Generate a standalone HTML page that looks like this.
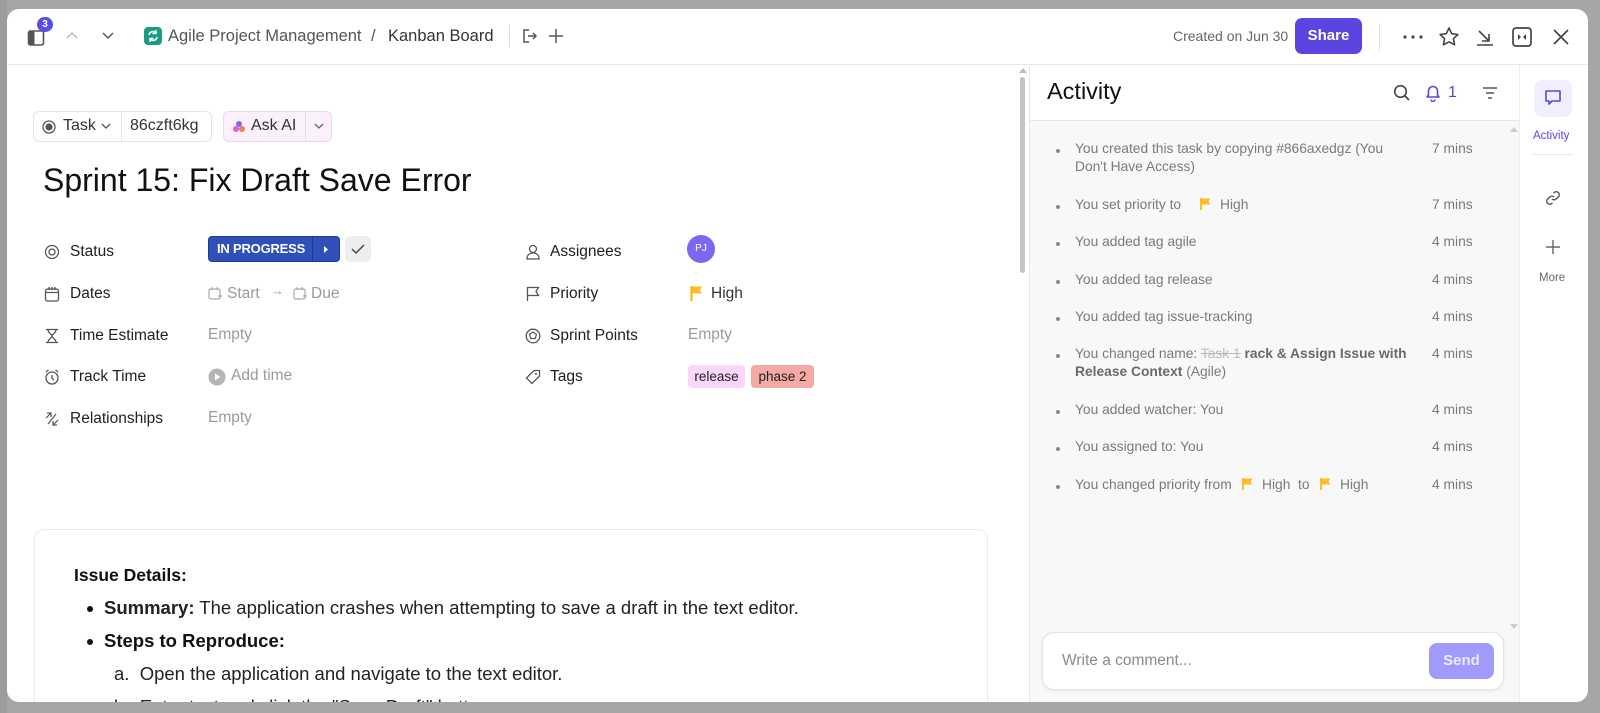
<!DOCTYPE html>
<html><head><meta charset="utf-8"><style>
*{box-sizing:border-box;margin:0;padding:0}
body{width:1600px;height:713px;overflow:hidden;background:#a6a6a6;font-family:"Liberation Sans",sans-serif;position:relative;color:#202020}
.a{position:absolute;white-space:nowrap}
.modal{position:absolute;left:7px;top:9px;width:1581px;height:693px;background:#fff;border-radius:12px;overflow:hidden}
.ic{position:absolute}
svg{display:block}
.lbl{font-size:15.5px;color:#202020}
.val{font-size:15.5px;color:#9a9a9a}
.act{font-size:13.8px;color:#7a7a7a}
.tm{font-size:13.8px;color:#7a7a7a}
.dot{position:absolute;width:4px;height:4px;border-radius:2px;background:#8a8a8a}
</style></head><body>
<div class="a" style="left:0;top:0;width:7px;height:713px;background:#9c9c9c"></div>
<div class="modal">
 <div class="a" style="left:0;top:55px;width:1581px;height:1px;background:#e8e8e8"></div>
 <div class="ic" style="left:20px;top:20px"><svg width="18" height="18" viewBox="0 0 18 18"><rect x="1.5" y="2" width="15" height="14" rx="2" fill="none" stroke="#555" stroke-width="1.6"/><rect x="1.5" y="2" width="6" height="14" rx="1.5" fill="#555"/></svg></div>
 <div class="a" style="left:30px;top:8px;width:16px;height:15px;border-radius:8px;background:#5b4ee6;color:#fff;font-size:10px;text-align:center;line-height:15px;font-weight:bold">3</div>
 <div class="ic" style="left:59px;top:22px"><svg width="12" height="8"><path d="M1 7 6 2 11 7" fill="none" stroke="#bbb" stroke-width="1.5"/></svg></div>
 <div class="ic" style="left:95px;top:23px"><svg width="12" height="8"><path d="M1 1 6 6 11 1" fill="none" stroke="#555" stroke-width="1.5"/></svg></div>
 <div class="a" style="left:137px;top:18px;width:18px;height:18px;border-radius:4px;background:#1a9c83"><svg width="18" height="18"><path d="M5 8a4 4 0 0 1 7-2M13 10a4 4 0 0 1-7 2" fill="none" stroke="#fff" stroke-width="1.6"/><path d="M12 3v3.5H8.5M6 15v-3.5h3.5" fill="none" stroke="#fff" stroke-width="1.4"/></svg></div>
 <div class="a" style="left:161px;top:18px;font-size:16.5px;color:#555">Agile Project Management</div>
 <div class="a" style="left:364px;top:18px;font-size:16.5px;color:#555">/</div>
 <div class="a" style="left:381px;top:18px;font-size:16.5px;color:#333">Kanban Board</div>
 <div class="a" style="left:502px;top:16px;width:1px;height:22px;background:#ddd"></div>
 <div class="ic" style="left:513px;top:18px"><svg width="18" height="18"><path d="M9 3H4v12h5M8 9h8M13 6l3 3-3 3" fill="none" stroke="#555" stroke-width="1.5"/></svg></div>
 <div class="ic" style="left:541px;top:19px"><svg width="16" height="16"><path d="M8 1v14M1 8h14" stroke="#555" stroke-width="1.5"/></svg></div>
 <div class="a" style="left:1166px;top:19px;font-size:14px;color:#666">Created on Jun 30</div>
 <div class="a" style="left:1288px;top:9px;width:67px;height:36px;border-radius:7px;background:#5b45e0;color:#fff;font-weight:bold;font-size:15px;text-align:center;line-height:36px">Share</div>
 <div class="a" style="left:1372px;top:14px;width:1px;height:28px;background:#e2e2e2"></div>
 <div class="ic" style="left:1396px;top:26px"><svg width="20" height="4"><circle cx="2" cy="2" r="1.6" fill="#444"/><circle cx="10" cy="2" r="1.6" fill="#444"/><circle cx="18" cy="2" r="1.6" fill="#444"/></svg></div>
 <div class="ic" style="left:1431px;top:17px"><svg width="22" height="22"><path d="M11 2l2.7 5.7 6.2.8-4.5 4.2 1.2 6.1L11 15.8 5.4 18.8l1.2-6.1L2.1 8.5l6.2-.8z" fill="none" stroke="#444" stroke-width="1.6" stroke-linejoin="round"/></svg></div>
 <div class="ic" style="left:1468px;top:18px"><svg width="20" height="20"><path d="M4 4l10 10M14 7v7H7M2 18h16" fill="none" stroke="#444" stroke-width="1.6"/></svg></div>
 <div class="ic" style="left:1504px;top:17px"><svg width="22" height="22"><rect x="2" y="2" width="18" height="18" rx="3" fill="none" stroke="#444" stroke-width="1.7"/><path d="M7 8v6l3-3zM15 8v6l-3-3z" fill="#444"/></svg></div>
 <div class="ic" style="left:1545px;top:19px"><svg width="18" height="18"><path d="M2 2l14 14M16 2 2 16" stroke="#444" stroke-width="1.7"/></svg></div>

 <div class="a" style="left:26px;top:102px;width:179px;height:31px;border:1px solid #e4e4e4;border-radius:6px"></div>
 <div class="a" style="left:114px;top:102px;width:1px;height:31px;background:#e4e4e4"></div>
 <div class="ic" style="left:35px;top:111px"><svg width="14" height="14"><circle cx="7" cy="7" r="6" fill="none" stroke="#555" stroke-width="1.3"/><circle cx="7" cy="7" r="3.6" fill="#555"/></svg></div>
 <div class="a" style="left:56px;top:108px;font-size:16px;color:#333">Task</div>
 <div class="ic" style="left:94px;top:114px"><svg width="10" height="7"><path d="M1 1l4 4 4-4" fill="none" stroke="#555" stroke-width="1.3"/></svg></div>
 <div class="a" style="left:123px;top:108px;font-size:16px;color:#333">86czft6kg</div>
 <div class="a" style="left:216px;top:102px;width:109px;height:31px;border:1px solid #f0d4f0;background:#fcf0fc;border-radius:6px"></div>
 <div class="a" style="left:298px;top:103px;width:1px;height:29px;background:#f0d4f0"></div>
 <div class="ic" style="left:225px;top:111px"><svg width="14" height="14"><circle cx="7" cy="4" r="3" fill="#7b6cf6"/><circle cx="4" cy="9" r="3" fill="#e45fd0"/><circle cx="10" cy="9" r="3" fill="#f27e5a"/></svg></div>
 <div class="a" style="left:244px;top:108px;font-size:16px;color:#333">Ask AI</div>
 <div class="ic" style="left:307px;top:114px"><svg width="10" height="7"><path d="M1 1l4 4 4-4" fill="none" stroke="#666" stroke-width="1.3"/></svg></div>

 <div class="a" style="left:36px;top:153px;font-size:32px;color:#111">Sprint 15: Fix Draft Save Error</div>

 <div class="ic" style="left:37px;top:235px"><svg width="16" height="16"><circle cx="8" cy="8" r="6.5" fill="none" stroke="#555" stroke-width="1.3"/><circle cx="8" cy="8" r="3" fill="none" stroke="#555" stroke-width="1.3"/></svg></div>
 <div class="a lbl" style="left:63px;top:234px">Status</div>
 <div class="a" style="left:201px;top:227px;width:132px;height:26px;border-radius:4px;background:#2f50b8;border:1px solid #1e3a9a"></div>
 <div class="a" style="left:210px;top:232px;font-size:13px;color:#fff;font-weight:bold;letter-spacing:-0.2px">IN PROGRESS</div>
 <div class="a" style="left:305px;top:228px;width:1px;height:24px;background:#1e3a9a"></div>
 <div class="ic" style="left:316px;top:236px"><svg width="6" height="9"><path d="M1 1l4 3.5L1 8z" fill="#fff"/></svg></div>
 <div class="a" style="left:338px;top:227px;width:26px;height:26px;border-radius:5px;background:#eee"></div>
 <div class="ic" style="left:344px;top:234px"><svg width="14" height="12"><path d="M1 6l4 4 8-8" fill="none" stroke="#444" stroke-width="1.5"/></svg></div>

 <div class="ic" style="left:37px;top:277px"><svg width="16" height="16"><rect x="1.5" y="3" width="13" height="12" rx="2" fill="none" stroke="#555" stroke-width="1.3"/><path d="M1.5 6.5h13M5 1v3M8 1v3M11 1v3" stroke="#555" stroke-width="1.3"/></svg></div>
 <div class="a lbl" style="left:63px;top:276px">Dates</div>
 <div class="ic" style="left:201px;top:277px"><svg width="14" height="15"><rect x="1" y="3" width="11" height="10" rx="1.5" fill="none" stroke="#aaa" stroke-width="1.2"/><path d="M4 1v3M9 1v3M10 10h4M12 8v4" stroke="#aaa" stroke-width="1.2"/></svg></div>
 <div class="a val" style="left:220px;top:276px">Start</div>
 <div class="a val" style="left:264px;top:274px;font-size:13px">→</div>
 <div class="ic" style="left:286px;top:277px"><svg width="14" height="15"><rect x="1" y="3" width="11" height="10" rx="1.5" fill="none" stroke="#aaa" stroke-width="1.2"/><path d="M4 1v3M9 1v3M10 10h4M12 8v4" stroke="#aaa" stroke-width="1.2"/></svg></div>
 <div class="a val" style="left:304px;top:276px">Due</div>

 <div class="ic" style="left:37px;top:319px"><svg width="16" height="16"><path d="M2 1.5h12M2 14.5h12M4 1.5c0 4 4 4.5 4 6.5s-4 2.5-4 6.5M12 1.5c0 4-4 4.5-4 6.5s4 2.5 4 6.5" fill="none" stroke="#555" stroke-width="1.3"/></svg></div>
 <div class="a lbl" style="left:63px;top:318px">Time Estimate</div>
 <div class="a val" style="left:201px;top:317px">Empty</div>

 <div class="ic" style="left:37px;top:360px"><svg width="16" height="16"><circle cx="8" cy="9" r="6" fill="none" stroke="#555" stroke-width="1.3"/><path d="M8 6v3.5l2 1.5M2 3l2.5-2M14 3l-2.5-2" fill="none" stroke="#555" stroke-width="1.3"/></svg></div>
 <div class="a lbl" style="left:63px;top:359px">Track Time</div>
 <div class="ic" style="left:201px;top:359px"><svg width="18" height="18"><circle cx="9" cy="9" r="8.5" fill="#b5b5b5"/><path d="M7 5.5v7l5.5-3.5z" fill="#fff"/></svg></div>
 <div class="a val" style="left:224px;top:358px">Add time</div>

 <div class="ic" style="left:37px;top:402px"><svg width="16" height="16"><path d="M2 7l5-5M3 2h4v4M14 9l-5 5M13 14H9v-4M4 13l8-10" fill="none" stroke="#555" stroke-width="1.2"/></svg></div>
 <div class="a lbl" style="left:63px;top:401px">Relationships</div>
 <div class="a val" style="left:201px;top:400px">Empty</div>

 <div class="ic" style="left:518px;top:235px"><svg width="16" height="16"><circle cx="8" cy="5" r="3.5" fill="none" stroke="#555" stroke-width="1.3"/><path d="M2 15c0-4 2.5-6 6-6s6 2 6 6z" fill="none" stroke="#555" stroke-width="1.3"/></svg></div>
 <div class="a lbl" style="left:543px;top:234px">Assignees</div>
 <div class="a" style="left:680px;top:226px;width:28px;height:28px;border-radius:14px;background:#7b68ee;color:#fff;font-size:10px;text-align:center;line-height:28px">PJ</div>

 <div class="ic" style="left:518px;top:277px"><svg width="16" height="16"><path d="M2.5 15V1.5h11l-2.5 4 2.5 4h-11" fill="none" stroke="#555" stroke-width="1.3"/></svg></div>
 <div class="a lbl" style="left:543px;top:276px">Priority</div>
 <div class="ic" style="left:683px;top:276px"><svg width="14" height="17"><path d="M1.5 1v15" stroke="#f5b400" stroke-width="2"/><path d="M2 1.5h10l-2 3.5 2 3.5H2z" fill="#fbbf24"/></svg></div>
 <div class="a" style="left:704px;top:276px;font-size:15.5px;color:#333">High</div>

 <div class="ic" style="left:518px;top:319px"><svg width="16" height="16"><circle cx="8" cy="8" r="6.8" fill="none" stroke="#555" stroke-width="1.3"/><path d="M8 4l3.5 2.5-1.3 4H5.8L4.5 6.5z" fill="none" stroke="#555" stroke-width="1.2"/></svg></div>
 <div class="a lbl" style="left:543px;top:318px">Sprint Points</div>
 <div class="a val" style="left:681px;top:317px">Empty</div>

 <div class="ic" style="left:518px;top:360px"><svg width="16" height="16"><path d="M9 1.5h5.5V7L7 14.5 1.5 9z" fill="none" stroke="#555" stroke-width="1.3"/><circle cx="11" cy="5" r="1" fill="#555"/></svg></div>
 <div class="a lbl" style="left:543px;top:359px">Tags</div>
 <div class="a" style="left:681px;top:356px;width:57px;height:23px;border-radius:4px;background:#fad7fa;font-size:13.5px;color:#222;text-align:center;line-height:23px">release</div>
 <div class="a" style="left:744px;top:356px;width:63px;height:23px;border-radius:4px;background:#f5a9a4;font-size:13.5px;color:#222;text-align:center;line-height:23px">phase 2</div>

 <div class="a" style="left:27px;top:520px;width:954px;height:200px;border:1px solid #ececec;border-radius:10px"></div>
 <div class="a" style="left:67px;top:556px;font-size:17.5px;font-weight:bold;color:#111">Issue Details:</div>
 <div class="a" style="left:80px;top:597px;width:6px;height:6px;border-radius:3px;background:#111"></div>
 <div class="a" style="left:97px;top:588px;font-size:18.5px;color:#222"><b>Summary:</b> The application crashes when attempting to save a draft in the text editor.</div>
 <div class="a" style="left:80px;top:630px;width:6px;height:6px;border-radius:3px;background:#111"></div>
 <div class="a" style="left:97px;top:621px;font-size:18.5px;font-weight:bold;color:#111">Steps to Reproduce:</div>
 <div class="a" style="left:107px;top:654px;font-size:18.5px;color:#222">a.&nbsp; Open the application and navigate to the text editor.</div>
 <div class="a" style="left:107px;top:687px;font-size:18.5px;color:#222">b.&nbsp; Enter text and click the "Save Draft" button.</div>

 <div class="a" style="left:1010px;top:56px;width:12px;height:637px;background:#fff"></div>
 <div class="a" style="left:1013px;top:68px;width:5px;height:196px;border-radius:3px;background:#c4c4c4"></div>
 <div class="ic" style="left:1012px;top:59px"><svg width="8" height="5"><path d="M0 5l4-5 4 5z" fill="#bbb"/></svg></div>

 <div class="a" style="left:1022px;top:56px;width:490px;height:637px;background:#f8f8f8;border-left:1px solid #e6e6e6"></div>
 <div class="a" style="left:1022px;top:56px;width:490px;height:56px;background:#fff;border-left:1px solid #e6e6e6;border-bottom:1px solid #e6e6e6"></div>
 <div class="a" style="left:1040px;top:69px;font-size:23.5px;color:#111">Activity</div>
 <div class="ic" style="left:1386px;top:75px"><svg width="18" height="18"><circle cx="7.5" cy="7.5" r="5.8" fill="none" stroke="#444" stroke-width="1.6"/><path d="M12 12l4 4" stroke="#444" stroke-width="1.8"/></svg></div>
 <div class="ic" style="left:1417px;top:74px"><svg width="18" height="19"><path d="M3 14h12l-1.5-2V8a4.5 4.5 0 0 0-9 0v4z" fill="none" stroke="#5b45e0" stroke-width="1.6" stroke-linejoin="round"/><path d="M7 16.5a2 2 0 0 0 4 0" fill="none" stroke="#5b45e0" stroke-width="1.5"/></svg></div>
 <div class="a" style="left:1441px;top:75px;font-size:16px;color:#5b45e0">1</div>
 <div class="ic" style="left:1475px;top:77px"><svg width="16" height="14"><path d="M1 2h14M4 7h8M6 12h4" stroke="#555" stroke-width="1.5"/></svg></div>
 <div class="ic" style="left:1503px;top:118px"><svg width="8" height="5"><path d="M0 5l4-5 4 5z" fill="#ccc"/></svg></div>
 <div class="ic" style="left:1503px;top:615px"><svg width="8" height="5"><path d="M0 0l4 5 4-5z" fill="#ccc"/></svg></div>

 <div class="dot" style="left:1049px;top:140px"></div>
 <div class="a act" style="left:1068px;top:132px">You created this task by copying #866axedgz (You</div>
 <div class="a act" style="left:1068px;top:150px">Don't Have Access)</div>
 <div class="a tm" style="left:1425px;top:132px">7 mins</div>

 <div class="dot" style="left:1049px;top:196px"></div>
 <div class="a act" style="left:1068px;top:188px">You set priority to</div>
 <div class="ic" style="left:1193px;top:189px"><svg width="12" height="12"><path d="M1 0v12" stroke="#f5b400" stroke-width="1.6"/><path d="M1.5 0.5h9l-2 3 2 3h-9z" fill="#fbbf24"/></svg></div>
 <div class="a act" style="left:1213px;top:188px">High</div>
 <div class="a tm" style="left:1425px;top:188px">7 mins</div>

 <div class="dot" style="left:1049px;top:233px"></div>
 <div class="a act" style="left:1068px;top:225px">You added tag agile</div>
 <div class="a tm" style="left:1425px;top:225px">4 mins</div>

 <div class="dot" style="left:1049px;top:271px"></div>
 <div class="a act" style="left:1068px;top:263px">You added tag release</div>
 <div class="a tm" style="left:1425px;top:263px">4 mins</div>

 <div class="dot" style="left:1049px;top:308px"></div>
 <div class="a act" style="left:1068px;top:300px">You added tag issue-tracking</div>
 <div class="a tm" style="left:1425px;top:300px">4 mins</div>

 <div class="dot" style="left:1049px;top:345px"></div>
 <div class="a act" style="left:1068px;top:337px">You changed name: <span style="color:#bbb;text-decoration:line-through">Task 1</span> <b style="color:#6a6a6a">rack &amp; Assign Issue with</b></div>
 <div class="a act" style="left:1068px;top:355px"><b style="color:#6a6a6a">Release Context</b> (Agile)</div>
 <div class="a tm" style="left:1425px;top:337px">4 mins</div>

 <div class="dot" style="left:1049px;top:401px"></div>
 <div class="a act" style="left:1068px;top:393px">You added watcher: You</div>
 <div class="a tm" style="left:1425px;top:393px">4 mins</div>

 <div class="dot" style="left:1049px;top:438px"></div>
 <div class="a act" style="left:1068px;top:430px">You assigned to: You</div>
 <div class="a tm" style="left:1425px;top:430px">4 mins</div>

 <div class="dot" style="left:1049px;top:476px"></div>
 <div class="a act" style="left:1068px;top:468px">You changed priority from</div>
 <div class="ic" style="left:1235px;top:469px"><svg width="12" height="12"><path d="M1 0v12" stroke="#f5b400" stroke-width="1.6"/><path d="M1.5 0.5h9l-2 3 2 3h-9z" fill="#fbbf24"/></svg></div>
 <div class="a act" style="left:1255px;top:468px">High</div>
 <div class="a act" style="left:1291px;top:468px">to</div>
 <div class="ic" style="left:1313px;top:469px"><svg width="12" height="12"><path d="M1 0v12" stroke="#f5b400" stroke-width="1.6"/><path d="M1.5 0.5h9l-2 3 2 3h-9z" fill="#fbbf24"/></svg></div>
 <div class="a act" style="left:1333px;top:468px">High</div>
 <div class="a tm" style="left:1425px;top:468px">4 mins</div>

 <div class="a" style="left:1035px;top:623px;width:462px;height:58px;background:#fff;border:1px solid #e4e4e4;border-radius:12px;box-shadow:0 1px 3px rgba(0,0,0,.08)"></div>
 <div class="a" style="left:1055px;top:643px;font-size:15.5px;color:#8a8a8a">Write a comment...</div>
 <div class="a" style="left:1422px;top:634px;width:65px;height:36px;border-radius:8px;background:#a09bfa;color:#eceaff;font-weight:bold;font-size:15px;text-align:center;line-height:36px">Send</div>

 <div class="a" style="left:1512px;top:56px;width:69px;height:637px;background:#fff;border-left:1px solid #eee"></div>
 <div class="a" style="left:1527px;top:71px;width:38px;height:37px;border-radius:8px;background:#f0efff"></div>
 <div class="ic" style="left:1537px;top:80px"><svg width="18" height="18"><path d="M2 2h14v10H8l-3 3v-3H2z" fill="none" stroke="#5b45e0" stroke-width="1.6" stroke-linejoin="round"/></svg></div>
 <div class="a" style="left:1526px;top:121px;font-size:11.5px;color:#5b45e0">Activity</div>
 <div class="a" style="left:1526px;top:145px;width:40px;height:1px;background:#e6e6e6"></div>
 <div class="ic" style="left:1538px;top:181px"><svg width="16" height="16"><path d="M7 9a3 3 0 0 0 4.2 0l2.5-2.5a3 3 0 0 0-4.2-4.2L8.5 3.3M9 7a3 3 0 0 0-4.2 0L2.3 9.5a3 3 0 0 0 4.2 4.2l1-1" fill="none" stroke="#555" stroke-width="1.4"/></svg></div>
 <div class="ic" style="left:1539px;top:231px"><svg width="14" height="14"><path d="M7 0v14M0 7h14" stroke="#666" stroke-width="1.4"/></svg></div>
 <div class="a" style="left:1532px;top:263px;font-size:11.5px;color:#666">More</div>
</div>
</body></html>
